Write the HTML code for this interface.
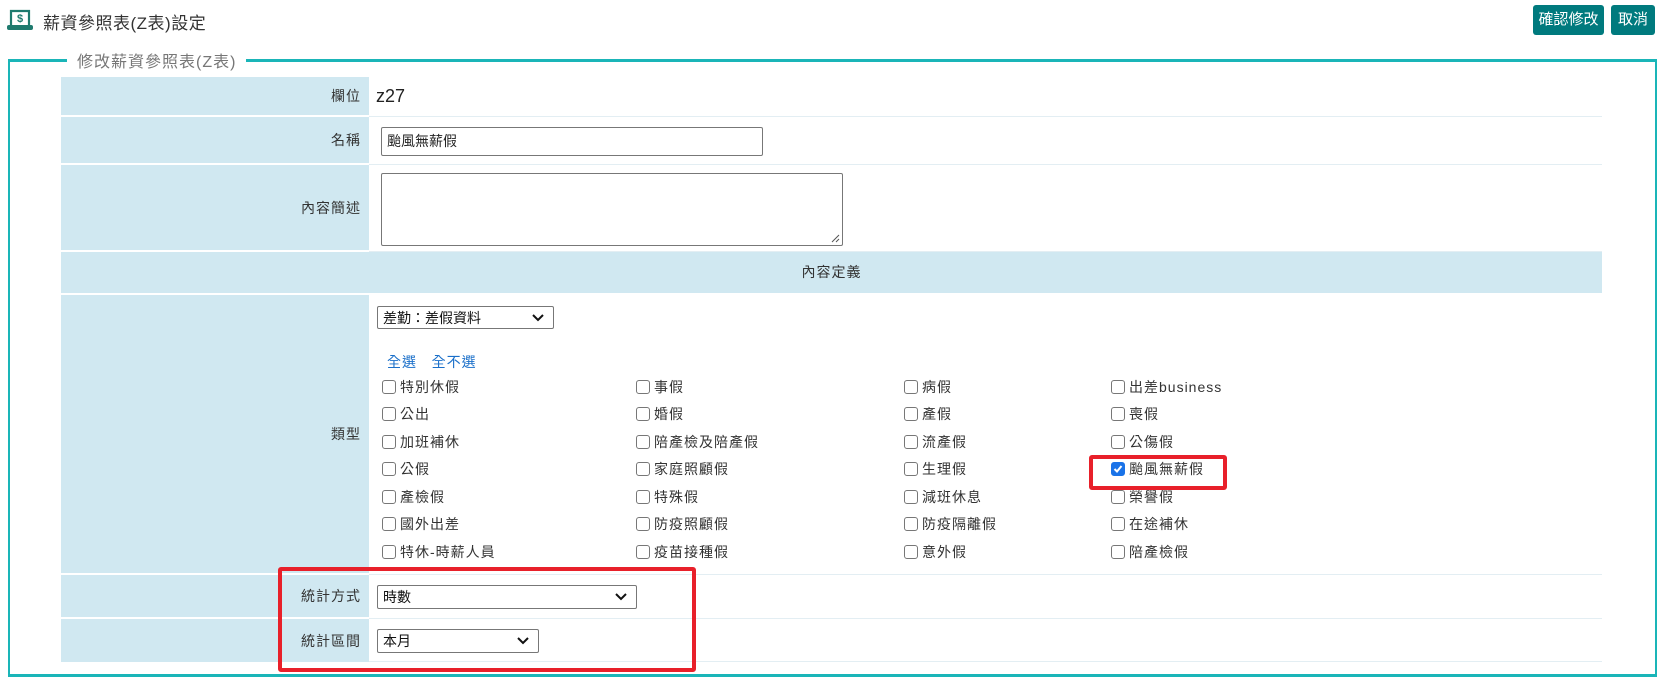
<!DOCTYPE html>
<html><head><meta charset="utf-8">
<style>
*{box-sizing:border-box;margin:0;padding:0}
body{width:1671px;height:681px;background:#fff;font-family:"Liberation Sans","Noto Sans CJK TC",sans-serif;color:#333;position:relative;overflow:hidden}
.a{position:absolute}
.title{left:43px;top:9px;font-size:17px;color:#333;letter-spacing:0.5px}
.btn{top:5px;height:30px;background:#007a7e;color:#fff;border-radius:3px;font-size:15px;line-height:30px;text-align:center}
.fs{left:8px;top:59px;width:1649px;height:618px;border:2px solid #1ab5b8;border-top-width:3px;border-bottom-width:3px}
.legend{left:67px;top:48px;background:#fff;padding:0 10px;font-size:16px;color:#777;letter-spacing:1px}
.lab{left:61px;width:308px;background:#d0e8f1;border-bottom:2px solid #fff;text-align:right;padding-right:8px;font-size:14px;letter-spacing:1px;display:flex;align-items:center;justify-content:flex-end}
.val{left:369px;width:1233px;border-bottom:1px solid #e3eef3}
.inp{border:1px solid #777;border-radius:2px;background:#fff;font-size:14px;padding-left:5px;color:#222}
.sel{border:1px solid #777;border-radius:2px;background:#fff;font-size:14px;padding-left:5px;color:#111;display:flex;align-items:center}
.sel svg{position:absolute;right:9px}
.cb{font-size:14px;letter-spacing:1px;display:flex;align-items:center;height:20px}
.cb i{display:inline-block;width:14px;height:14px;border:1.5px solid #777;border-radius:3px;margin-right:4px}
.cb i.on{background:#1a73e8;border-color:#1a73e8;position:relative}
.red{border:4px solid #e8202a;border-radius:3px}
</style></head><body>
<svg class="a" style="left:7px;top:9px" width="26" height="22" viewBox="0 0 26 22"><path d="M4 16V2h18v14" fill="none" stroke="#1e7a6e" stroke-width="2.2"/><text x="13" y="13" font-size="11" font-weight="bold" text-anchor="middle" fill="#1e7a6e" font-family="Liberation Sans">$</text><rect x="0" y="16" width="26" height="5" rx="2" fill="#1e7a6e"/></svg>
<div class="a title">薪資參照表(Z表)設定</div>
<div class="a btn" style="left:1533px;width:71px">確認修改</div>
<div class="a btn" style="left:1611px;width:44px">取消</div>
<div class="a fs"></div>
<div class="a legend">修改薪資參照表(Z表)</div>

<div class="a lab" style="top:77px;height:40px">欄位</div>
<div class="a val" style="top:77px;height:40px"></div>
<div class="a" style="left:376px;top:86px;font-size:18px;color:#222">z27</div>

<div class="a lab" style="top:117px;height:48px">名稱</div>
<div class="a val" style="top:117px;height:48px"></div>
<div class="a inp" style="left:381px;top:127px;width:382px;height:29px;line-height:27px">颱風無薪假</div>

<div class="a lab" style="top:165px;height:87px">內容簡述</div>
<div class="a val" style="top:165px;height:87px"></div>
<div class="a inp" style="left:381px;top:173px;width:462px;height:73px"></div>
<svg class="a" style="left:830px;top:233px" width="10" height="10"><path d="M9 2L2 9M9 6L6 9" stroke="#555" stroke-width="1"/></svg>

<div class="a" style="left:61px;top:252px;width:1541px;height:43px;background:#d0e8f1;border-bottom:2px solid #fff;font-size:14px;letter-spacing:1px;text-align:center;line-height:41px">內容定義</div>

<div class="a lab" style="top:295px;height:280px">類型</div>
<div class="a val" style="top:295px;height:280px"></div>
<div class="a sel" style="left:377px;top:306px;width:177px;height:23px">差勤：差假資料<svg width="12" height="8"><path d="M1 1l5 5 5-5" stroke="#111" stroke-width="2" fill="none"/></svg></div>
<div class="a" style="left:387px;top:352px;font-size:14px;color:#1a6fc9;letter-spacing:1px">全選&nbsp;&nbsp;&nbsp;全不選</div>

<div class="a cb" style="left:382px;top:377px"><i></i>特別休假</div>
<div class="a cb" style="left:382px;top:404px"><i></i>公出</div>
<div class="a cb" style="left:382px;top:432px"><i></i>加班補休</div>
<div class="a cb" style="left:382px;top:459px"><i></i>公假</div>
<div class="a cb" style="left:382px;top:487px"><i></i>產檢假</div>
<div class="a cb" style="left:382px;top:514px"><i></i>國外出差</div>
<div class="a cb" style="left:382px;top:542px"><i></i>特休-時薪人員</div>

<div class="a cb" style="left:636px;top:377px"><i></i>事假</div>
<div class="a cb" style="left:636px;top:404px"><i></i>婚假</div>
<div class="a cb" style="left:636px;top:432px"><i></i>陪產檢及陪產假</div>
<div class="a cb" style="left:636px;top:459px"><i></i>家庭照顧假</div>
<div class="a cb" style="left:636px;top:487px"><i></i>特殊假</div>
<div class="a cb" style="left:636px;top:514px"><i></i>防疫照顧假</div>
<div class="a cb" style="left:636px;top:542px"><i></i>疫苗接種假</div>

<div class="a cb" style="left:904px;top:377px"><i></i>病假</div>
<div class="a cb" style="left:904px;top:404px"><i></i>產假</div>
<div class="a cb" style="left:904px;top:432px"><i></i>流產假</div>
<div class="a cb" style="left:904px;top:459px"><i></i>生理假</div>
<div class="a cb" style="left:904px;top:487px"><i></i>減班休息</div>
<div class="a cb" style="left:904px;top:514px"><i></i>防疫隔離假</div>
<div class="a cb" style="left:904px;top:542px"><i></i>意外假</div>

<div class="a cb" style="left:1111px;top:377px"><i></i>出差business</div>
<div class="a cb" style="left:1111px;top:404px"><i></i>喪假</div>
<div class="a cb" style="left:1111px;top:432px"><i></i>公傷假</div>
<div class="a cb" style="left:1111px;top:459px"><i class="on"><svg style="position:absolute;left:1px;top:1px" width="10" height="10"><path d="M1.5 5l2.5 2.5L8.5 2" stroke="#fff" stroke-width="2" fill="none"/></svg></i>颱風無薪假</div>
<div class="a cb" style="left:1111px;top:487px"><i></i>榮譽假</div>
<div class="a cb" style="left:1111px;top:514px"><i></i>在途補休</div>
<div class="a cb" style="left:1111px;top:542px"><i></i>陪產檢假</div>

<div class="a lab" style="top:575px;height:44px">統計方式</div>
<div class="a val" style="top:575px;height:44px"></div>
<div class="a sel" style="left:377px;top:585px;width:260px;height:24px">時數<svg width="12" height="8"><path d="M1 1l5 5 5-5" stroke="#111" stroke-width="2" fill="none"/></svg></div>

<div class="a lab" style="top:619px;height:43px;border-bottom:0">統計區間</div>
<div class="a val" style="top:619px;height:43px"></div>
<div class="a sel" style="left:377px;top:629px;width:162px;height:24px">本月<svg width="12" height="8"><path d="M1 1l5 5 5-5" stroke="#111" stroke-width="2" fill="none"/></svg></div>

<div class="a red" style="left:1089px;top:455px;width:138px;height:35px"></div>
<div class="a red" style="left:278px;top:567px;width:418px;height:105px"></div>
</body></html>
